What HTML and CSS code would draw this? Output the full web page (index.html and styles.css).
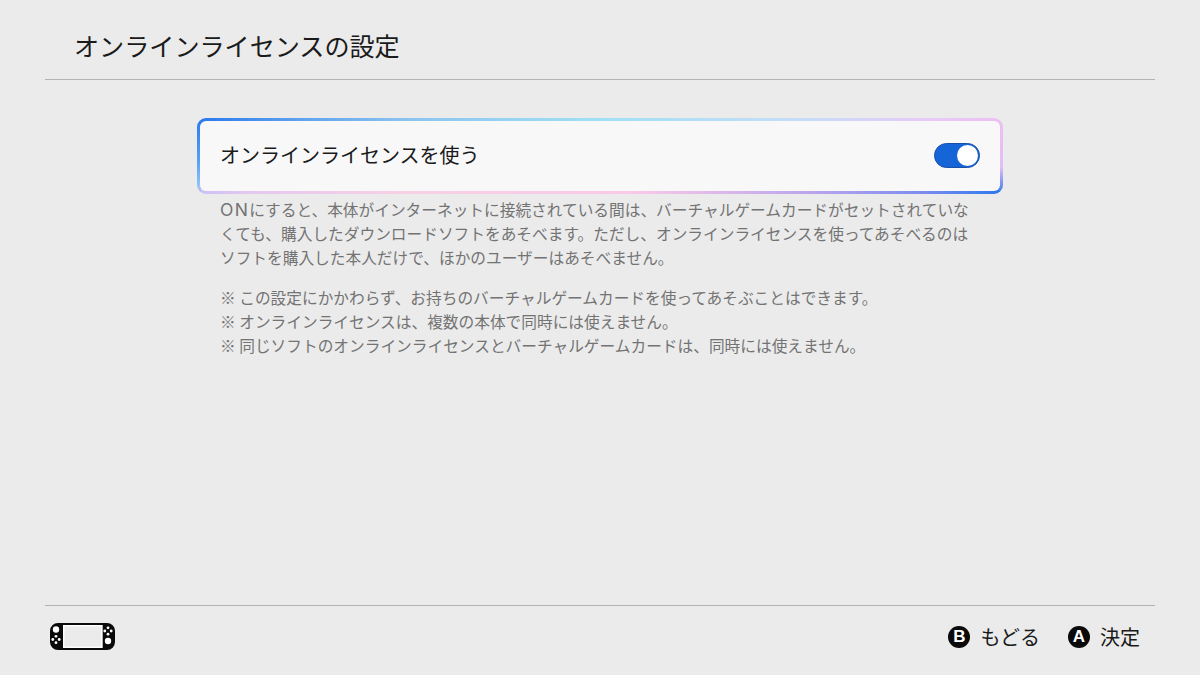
FILE: index.html
```html
<!DOCTYPE html>
<html lang="ja">
<head>
<meta charset="utf-8">
<title>オンラインライセンスの設定</title>
<link rel="stylesheet" href="styles.css">
</head>
<body>
<div class="screen">
  <header class="header"><h1 class="title">オンラインライセンスの設定</h1></header>
  <main class="main">
    <div class="column">
      <div class="card-frame">
        <div class="card">
          <span class="card-label">オンラインライセンスを使う</span>
          <span class="toggle"><span class="knob"></span></span>
        </div>
      </div>
      <div class="desc">
        <p class="para"><span class="latin">ON</span>にすると、本体がインターネットに接続されている間は、バーチャルゲームカードがセットされていな<br>くても、購入したダウンロードソフトをあそべます。ただし、オンラインライセンスを使ってあそべるのは<br>ソフトを購入した本人だけで、ほかのユーザーはあそべません。</p>
        <p class="para">※ この設定にかかわらず、お持ちのバーチャルゲームカードを使ってあそぶことはできます。<br>※ オンラインライセンスは、複数の本体で同時には使えません。<br>※ 同じソフトのオンラインライセンスとバーチャルゲームカードは、同時には使えません。</p>
      </div>
    </div>
  </main>
  <footer class="footer">
    <svg class="console" width="65" height="27" viewBox="0 0 65 27">
      <path fill="#0a0a0a" fill-rule="evenodd" d="M8 0H57A8 8 0 0 1 65 8V19A8 8 0 0 1 57 27H8A8 8 0 0 1 0 19V8A8 8 0 0 1 8 0ZM13 2V25H52.500V2Z"/>
      <rect x="13.700" y="2.700" width="38" height="21.600" fill="none" stroke="#fff" stroke-width="1.400"/>
      <circle cx="6" cy="6.500" r="3.200" fill="#fff"/>
      <g fill="#fff"><circle cx="6" cy="13.300" r="1.400"/><circle cx="6" cy="19.700" r="1.400"/><circle cx="2.800" cy="16.500" r="1.400"/><circle cx="9.200" cy="16.500" r="1.400"/></g>
      <g fill="#fff"><circle cx="58" cy="4.800" r="1.400"/><circle cx="58" cy="11.200" r="1.400"/><circle cx="54.800" cy="8" r="1.400"/><circle cx="61.200" cy="8" r="1.400"/></g>
      <circle cx="58" cy="18" r="3.200" fill="#fff"/>
    </svg>
    <div class="actions">
      <span class="action"><span class="btn">B</span><span>もどる</span></span>
      <span class="action"><span class="btn">A</span><span>決定</span></span>
    </div>
  </footer>
</div>
</body>
</html>
```
FILE: styles.css
```css
* { box-sizing: border-box; }
html, body { margin: 0; padding: 0; }
body {
  width: 1200px;
  height: 675px;
  overflow: hidden;
  background: #ebebeb;
  color: #1a1a1a;
  font-family: "Noto Sans CJK JP", "Noto Sans", sans-serif;
}
.screen {
  width: 1200px;
  height: 675px;
  padding: 0 45px;
  display: flex;
  flex-direction: column;
}
.header {
  height: 80px;
  flex: none;
  border-bottom: 1px solid #b4b4b4;
  padding: 27px 0 0 29px;
}
.title {
  margin: 0;
  font-size: 25.1px;
  line-height: 36px;
  font-weight: 400;
}
.main {
  flex: 1;
  padding: 38px 0 0 152px;
}
.column { width: 806px; }
.card-frame {
  height: 76px;
  padding: 3px;
  border-radius: 9px;
  background:
    linear-gradient(180deg, #2a78ee 0%, #58a4f4 60%, #88c0f8 85%, #c8c0f6 100%) left top / 4px 100% no-repeat,
    linear-gradient(180deg, #ecc0f4 0%, #e4bcf4 65%, #7090f0 88%, #2a78ee 100%) right top / 4px 100% no-repeat,
    linear-gradient(90deg, #2a78ee 0%, #5ca0ee 12%, #8cc4f0 26%, #a0e0f4 50%, #c8dcfa 76%, #e8c8f6 92%, #ecc0f4 100%) left top / 100% 50% no-repeat,
    linear-gradient(90deg, #c8c0f6 0%, #e4c8f0 6%, #f8d0e4 26%, #f8c8e8 55%, #b8a4ec 77%, #7c8cee 90%, #2a78ee 100%) left bottom / 100% 50% no-repeat;
}
.card {
  height: 70px;
  border-radius: 6px;
  background: #f8f8f9;
  padding: 0 20px;
  display: flex;
  align-items: center;
  justify-content: space-between;
}
.card-label {
  font-size: 20px;
  line-height: 30px;
  margin-top: -2px;
}
.toggle {
  width: 46px;
  height: 25px;
  border-radius: 13px;
  background: #1565d8;
  border: 1px solid #1a4fa8;
  display: flex;
  justify-content: flex-end;
  align-items: center;
  padding-right: 1px;
  margin-top: -2px;
}
.knob {
  width: 21px;
  height: 21px;
  border-radius: 50%;
  background: #fff;
}
.desc {
  padding: 4px 0 0 23px;
  font-size: 15.7px;
  line-height: 24px;
  color: #737373;
}
.latin {
  font-family: "Inter", sans-serif;
  font-size: 17.5px;
  letter-spacing: 1.3px;
}
.para { margin: 0 0 16px; white-space: nowrap; }
.footer {
  height: 70px;
  flex: none;
  border-top: 1px solid #b4b4b4;
  padding: 0 15px 8px 5px;
  display: flex;
  align-items: center;
  justify-content: space-between;
}
.actions { display: flex; gap: 28px; }
.action {
  display: flex;
  align-items: center;
  gap: 10px;
  font-size: 20px;
  line-height: 30px;
}
.btn {
  width: 22px;
  height: 22px;
  border-radius: 50%;
  background: #0a0a0a;
  color: #fff;
  font-family: "Liberation Sans", sans-serif;
  font-weight: 700;
  font-size: 17px;
  line-height: 22px;
  text-align: center;
}
```
